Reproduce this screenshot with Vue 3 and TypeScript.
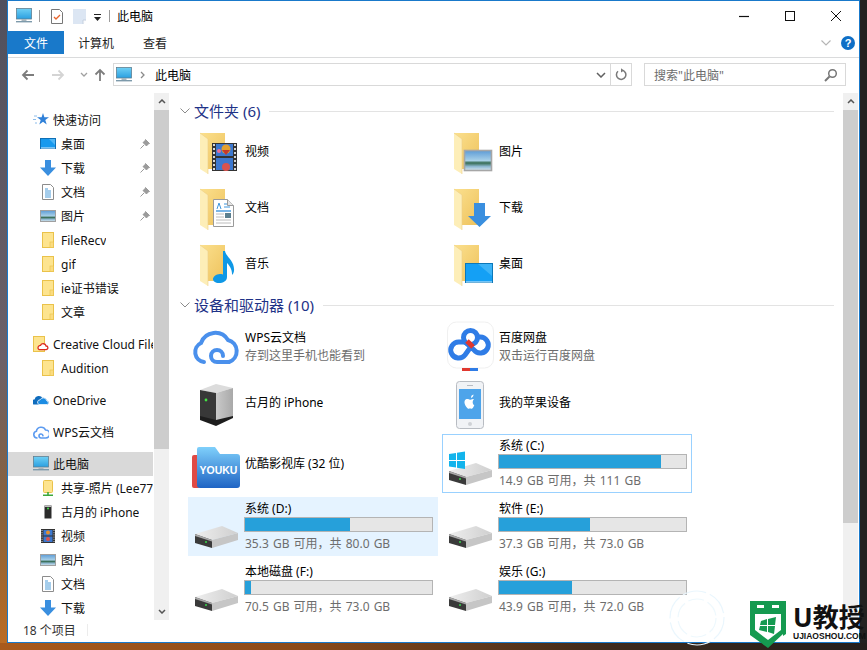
<script setup lang="ts">
interface NavRow {
  label: string
  icon: string
  child?: boolean
  pin?: boolean
  active?: boolean
  group?: boolean
}

interface Drive {
  title: string
  sub: string
  used: number
  win?: boolean
  state?: string
}

const navRows: NavRow[] = [
  { label: '快速访问', icon: 'n-star' },
  { label: '桌面', icon: 'n-desktop', child: true, pin: true },
  { label: '下载', icon: 'n-down', child: true, pin: true },
  { label: '文档', icon: 'n-doc', child: true, pin: true },
  { label: '图片', icon: 'n-pic', child: true, pin: true },
  { label: 'FileRecv', icon: 'n-folder', child: true },
  { label: 'gif', icon: 'n-folder', child: true },
  { label: 'ie证书错误', icon: 'n-folder', child: true },
  { label: '文章', icon: 'n-folder', child: true },
  { label: 'Creative Cloud Files', icon: 'n-cc', group: true },
  { label: 'Audition', icon: 'n-folder', child: true },
  { label: 'OneDrive', icon: 'n-onedrive', group: true },
  { label: 'WPS云文档', icon: 'n-wps', group: true },
  { label: '此电脑', icon: 'pc', group: true, active: true },
  { label: '共享-照片 (Lee77)', icon: 'n-share', child: true },
  { label: '古月的 iPhone', icon: 'n-tower', child: true },
  { label: '视频', icon: 'n-film', child: true },
  { label: '图片', icon: 'n-pic', child: true },
  { label: '文档', icon: 'n-doc', child: true },
  { label: '下载', icon: 'n-down', child: true }
]

const folders = [
  { label: '视频', overlay: 'ov-film' },
  { label: '图片', overlay: 'ov-pic' },
  { label: '文档', overlay: 'ov-doc' },
  { label: '下载', overlay: 'ov-down' },
  { label: '音乐', overlay: 'ov-music' },
  { label: '桌面', overlay: 'ov-desktop' }
]

const drivesTop = [
  { title: 'WPS云文档', sub: '存到这里手机也能看到', icon: 'd-wps' },
  { title: '百度网盘', sub: '双击运行百度网盘', icon: 'd-baidu' },
  { title: '古月的 iPhone', sub: '', icon: 'd-tower', lift: true },
  { title: '我的苹果设备', sub: '', icon: 'd-iphone', lift: true },
  { title: '优酷影视库 (32 位)', sub: '', icon: 'd-youku' }
]

const drives: Drive[] = [
  { title: '系统 (C:)', sub: '14.9 GB 可用，共 111 GB', used: 86.6, win: true, state: 'focused' },
  { title: '系统 (D:)', sub: '35.3 GB 可用，共 80.0 GB', used: 55.9, state: 'hovered' },
  { title: '软件 (E:)', sub: '37.3 GB 可用，共 73.0 GB', used: 48.9 },
  { title: '本地磁盘 (F:)', sub: '70.5 GB 可用，共 73.0 GB', used: 3.4 },
  { title: '娱乐 (G:)', sub: '43.9 GB 可用，共 72.0 GB', used: 39 }
]
</script>

<template>
  <div class="desk">
    <svg class="defs" width="0" height="0" aria-hidden="true">
      <defs>
        <linearGradient id="gFolder" x1="0" y1="0" x2="1" y2="1">
          <stop offset="0" stop-color="#fbe08e" />
          <stop offset="1" stop-color="#eec25c" />
        </linearGradient>
        <linearGradient id="gScreen" x1="0" y1="0" x2="0" y2="1">
          <stop offset="0" stop-color="#6fd0f5" />
          <stop offset="1" stop-color="#2a9fe0" />
        </linearGradient>
        <linearGradient id="gPhoto" x1="0" y1="0" x2="0" y2="1">
          <stop offset="0" stop-color="#5c9bd6" />
          <stop offset="0.5" stop-color="#a8d0e8" />
          <stop offset="0.62" stop-color="#356b52" />
          <stop offset="0.8" stop-color="#8db7d0" />
          <stop offset="1" stop-color="#dbe9f2" />
        </linearGradient>
        <linearGradient id="gDrive" x1="0" y1="0" x2="1" y2="0">
          <stop offset="0" stop-color="#eeeeee" />
          <stop offset="1" stop-color="#cfcfcf" />
        </linearGradient>
        <linearGradient id="gTower" x1="0" y1="0" x2="1" y2="0">
          <stop offset="0" stop-color="#c9c9c9" />
          <stop offset="1" stop-color="#a9a9a9" />
        </linearGradient>
        <linearGradient id="gYouku" x1="0" y1="0" x2="0" y2="1">
          <stop offset="0" stop-color="#7fd0fb" />
          <stop offset="1" stop-color="#1f64c4" />
        </linearGradient>

        <g id="pc">
          <rect x="0.5" y="0.5" width="15" height="10.5" fill="url(#gScreen)" stroke="#5f7f92" stroke-width="0.8" />
          <rect x="5.5" y="11" width="5" height="2" fill="#a9b6bd" />
          <rect x="0" y="13" width="16" height="1.4" fill="#7d9aab" />
        </g>
        <g id="n-star">
          <path d="M10 1l1.4 4.3H16l-3.7 2.8 1.4 4.4L10 9.8l-3.7 2.7 1.4-4.4L4 5.3h4.6z" fill="#2f80d8" />
          <path d="M4 4H1M3 7.5H0M4 11H2" stroke="#8cbcea" stroke-width="1" />
        </g>
        <g id="n-desktop">
          <rect x="0.5" y="2.5" width="15" height="10" fill="#1799ee" stroke="#0f6fb5" />
          <path d="M9 3h6v6z" fill="#4fb6f6" />
          <rect x="1" y="11.5" width="14" height="1" fill="#d5ecfb" />
        </g>
        <g id="n-down">
          <path d="M5 0h6v7.5h5L8 16 0 7.5h5z" fill="#3a8fdf" />
        </g>
        <g id="n-doc">
          <path d="M2.5 0.5h8l3 3v12h-11z" fill="#fff" stroke="#8c8c8c" />
          <path d="M5 5h3M5 7h6M5 9h6M5 11h6M5 13h6" stroke="#4a9bd8" stroke-width="1" />
        </g>
        <g id="n-pic">
          <rect x="0.5" y="2.5" width="15" height="11" fill="url(#gPhoto)" stroke="#a0a0a0" />
        </g>
        <g id="n-folder">
          <rect x="2.5" y="0.5" width="11" height="15" fill="#fde48f" stroke="#eac24a" />
          <rect x="10" y="10" width="3.5" height="5.5" fill="#fbdc7f" stroke="#eac24a" stroke-width="0.6" />
        </g>
        <g id="n-cc">
          <rect x="0.5" y="0.5" width="11" height="15" fill="#fde48f" stroke="#eac24a" />
          <path d="M5 12a2.5 2.5 0 0 1 2.5-2.6 3 3 0 0 1 5.6.6 1.8 1.8 0 0 1 0 3.6H7a1.8 1.8 0 0 1-2-1.6z" fill="#fff" stroke="#dc2b1f" stroke-width="1.3" />
        </g>
        <g id="n-onedrive">
          <path d="M1 12.5a2.5 2.5 0 0 1 .5-5A4.5 4.5 0 0 1 9.6 6a3.4 3.4 0 0 1 4.4 2.4 2.2 2.2 0 0 1 .5 4.1z" fill="#0f6cbd" />
          <path d="M6 12.5a2.4 2.4 0 0 1 1-4.6 3.6 3.6 0 0 1 6.8 1 2 2 0 0 1 .6 3.6z" fill="#1b8ce3" stroke="#fff" stroke-width="0.8" />
        </g>
        <g id="n-wps">
          <path d="M4 14a3.4 3.4 0 0 1-.6-6.7A4.8 4.8 0 0 1 12.5 6a3.9 3.9 0 0 1 .3 8H8a2 2 0 1 1 2-2.2" fill="none" stroke="#5c9bf0" stroke-width="1.6" stroke-linecap="round" />
        </g>
        <g id="n-share">
          <rect x="3.5" y="0.5" width="9" height="12" rx="1" fill="#fde48f" stroke="#eac24a" />
          <path d="M8 12v3M3 15.2h10" stroke="#3ca83c" stroke-width="1.6" />
        </g>
        <g id="n-tower">
          <path d="M4.5 1.5h7v13h-7z" fill="#2c2c2c" />
          <path d="M4.5 1.5h7v1.5h-7z" fill="#bfbfbf" />
          <circle cx="8" cy="4.5" r="1" fill="#46e04a" />
        </g>
        <g id="n-film">
          <rect x="1" y="1" width="14" height="14" fill="#333" />
          <rect x="3.5" y="2" width="9" height="5.5" fill="#3d78cf" />
          <rect x="3.5" y="8.5" width="9" height="5.5" fill="#3d78cf" />
          <circle cx="8" cy="4.5" r="2" fill="#e38f2e" />
          <circle cx="8" cy="11" r="2" fill="#d9534f" />
          <path d="M2 2v12M14 2v12" stroke="#ddd" stroke-dasharray="1 1.2" />
        </g>

        <g id="folder">
          <path d="M8 6h25v36H8z" fill="url(#gFolder)" />
          <path d="M8 6l8 6v35l-8-5z" fill="#fdeeb8" />
          <path d="M8 6l8 6v35" fill="none" stroke="#eccf86" stroke-width="0.6" />
        </g>
        <g id="ov-film">
          <rect x="20" y="16" width="25" height="28" fill="#333" />
          <rect x="24" y="17" width="17" height="12" fill="#3d78cf" />
          <rect x="24" y="31" width="17" height="12" fill="#3d78cf" />
          <circle cx="34" cy="22" r="4.5" fill="#e3a02e" />
          <path d="M30 23l4 5 4-5z" fill="#c5392f" />
          <circle cx="34" cy="40" r="4" fill="#d9534f" />
          <circle cx="27" cy="24" r="2" fill="#e86f9a" />
          <path d="M22 17v26M43 17v26" stroke="#d8d8d8" stroke-width="2" stroke-dasharray="2 2" />
        </g>
        <g id="ov-doc">
          <path d="M21.5 16.5h14l6 6v21h-20z" fill="#fff" stroke="#9a9a9a" />
          <path d="M35.5 16.5v6h6" fill="#e5e5e5" stroke="#9a9a9a" />
          <path d="M25 26l2-6 2 6M32 21h3M32 24h6" fill="none" stroke="#3f96dc" stroke-width="1" />
          <path d="M24 28h15" stroke="#3f96dc" stroke-width="1.4" />
          <path d="M24 31h8M24 34h8M24 37h15M24 40h15" stroke="#bcbcbc" />
          <rect x="33" y="30" width="6" height="5" fill="#5b7f8f" />
        </g>
        <g id="ov-pic">
          <rect x="18.5" y="23.5" width="27" height="20" fill="url(#gPhoto)" stroke="#a6a6a6" stroke-width="1.6" />
        </g>
        <g id="ov-down">
          <path d="M28 20h11v13h6L33.5 44 22 33h6z" fill="#3a8fdf" />
        </g>
        <g id="ov-music">
          <path d="M33 12c1 6 10 10 9 20-.3 2-1 3-2 4 .4-6-3-10-5-12v14c0 4-4 6-8 6s-6-2-6-4 3-5 7-5c2 0 3 .5 3 .5V12z" fill="#0f98e6" />
        </g>
        <g id="ov-desktop">
          <rect x="19.5" y="24.5" width="27" height="19" fill="#14a0f5" stroke="#0c78b9" />
          <path d="M32 25h14v12z" fill="#3cb4f8" />
          <rect x="20" y="42.5" width="26" height="1" fill="#d5ecfb" />
        </g>

        <g id="d-wps">
          <path d="M12 41a10 10 0 0 1-3-19A15 15 0 0 1 36 19a11.5 11.5 0 0 1 1 22H25a6 6 0 1 1 6-6" fill="none" stroke="#4a90ec" stroke-width="4" stroke-linecap="round" />
        </g>
        <g id="d-baidu">
          <rect x="1.5" y="1" width="46" height="46" rx="9" fill="#fff" stroke="#f0f0f0" />
          <path d="M24 27l-5 7a8 8 0 1 1-6-13h6l9 8a8 8 0 1 0 6-13h-3" fill="none" stroke="#2f7ce6" stroke-width="5" />
          <circle cx="24.500" cy="16.500" r="7" fill="none" stroke="#2f7ce6" stroke-width="5" />
          <path d="M21 20l6 6" stroke="#e0382f" stroke-width="5" />
          <rect x="16" y="47" width="8" height="3" fill="#e0382f" />
          <rect x="24" y="47" width="8" height="3" fill="#2f7ce6" />
        </g>
        <g id="d-tower">
          <path d="M24 13l17-5-17-4L8 10z" fill="#dcdcdc" />
          <path d="M24 13l17-5v29l-17 7z" fill="url(#gTower)" />
          <path d="M8 10l16 3v31L8 38z" fill="#383838" />
          <path d="M8 36l16 4 17-4v2l-17 8L8 40z" fill="#1d1d1d" />
          <circle cx="14" cy="20" r="1.400" fill="#43e343" />
        </g>
        <g id="d-iphone">
          <rect x="10.500" y="1.500" width="27" height="47" rx="3" fill="#f1f3f6" stroke="#b8bcc2" />
          <rect x="13" y="9" width="22" height="30" fill="#4ea4ea" />
          <path d="M28 19c-2-.5-3 .7-4 .7s-2-1.200-4-.5c-2 .8-2.500 5 1.500 9 1 1 1.800.3 2.500.3s1.500.7 2.500-.3c1-1 1.500-2.400 1.800-3-2-1-2.100-4.200-.3-6.200z" fill="#fff" />
          <path d="M25 18c0-2 1-3 2.500-3.400 0 2-1 3-2.500 3.400z" fill="#fff" />
          <circle cx="24" cy="44" r="2" fill="#cfd2d6" />
          <path d="M21 5.500h6" stroke="#b8bcc2" />
        </g>
        <g id="d-youku">
          <rect x="0" y="15" width="8" height="33" rx="2" fill="#e04a45" />
          <path d="M5 9q0-2 2-2h16l5 7h17q3 0 3 3v28q0 3-3 3H8q-3 0-3-3z" fill="url(#gYouku)" />
          <text x="26.500" y="34" text-anchor="middle" font-family="Liberation Sans, sans-serif" font-weight="700" font-size="10.500" fill="#fff">YOUKU</text>
        </g>
        <g id="d-drive">
          <path d="M3 31l27-8 16 7-26 7z" fill="url(#gDrive)" />
          <path d="M3 31l17 6v8L3 40z" fill="#3a3a3a" />
          <path d="M3 31l17 6v1.500L3 33z" fill="#a8a8a8" />
          <path d="M20 37l26-7v7l-26 8z" fill="#c6c6c6" />
          <circle cx="14" cy="39" r="1" fill="#36d84a" />
        </g>
        <g id="d-win">
          <path d="M3 14l7-1v7H3zM11 12.800l8-1.300V20h-8zM3 21h7v6.500l-7-1zM11 21h8v8l-8-1.300z" fill="#13b4ec" />
        </g>
      </defs>
    </svg>

    <div class="window">
      <header class="titlebar">
        <svg class="s16" viewBox="0 0 16 16"><use href="#pc" /></svg>
        <span class="qsep"></span>
        <svg class="qa-doc" viewBox="0 0 12 15">
          <path d="M.5.5h8l3 3v11H.500z" fill="#fff" stroke="#777" />
          <path d="M3 8l2 2 4-4" fill="none" stroke="#e8642c" stroke-width="1.300" />
        </svg>
        <svg class="qa-page" viewBox="0 0 13 15">
          <path d="M0 0h13v11l-3 4H0z" fill="#dce6f3" />
          <path d="M10 15v-4h3" fill="#fff" stroke="#c5d0de" />
        </svg>
        <svg class="qa-drop" viewBox="0 0 9 7">
          <path d="M1 .500h7" stroke="#222" />
          <path d="M1 3h7L4.500 7z" fill="#222" />
        </svg>
        <span class="qsep"></span>
        <span class="title">此电脑</span>
        <div class="winbtns">
          <svg viewBox="0 0 12 12" class="wbtn"><path d="M1 6.500h10" stroke="#111" stroke-width="1.200" /></svg>
          <svg viewBox="0 0 12 12" class="wbtn"><rect x="1.500" y="1.500" width="9" height="9" fill="none" stroke="#111" /></svg>
          <svg viewBox="0 0 12 12" class="wbtn"><path d="M1 1l10 10M11 1L1 11" stroke="#111" stroke-width="1" /></svg>
        </div>
      </header>

      <nav class="tabs">
        <span class="tab tab-file">文件</span>
        <span class="tab">计算机</span>
        <span class="tab">查看</span>
        <svg class="rib-chev" viewBox="0 0 10 6"><path d="M.500.500L5 5 9.500.500" fill="none" stroke="#b4b4b4" stroke-width="1.100" /></svg>
        <span class="help">?</span>
      </nav>

      <div class="addr-row">
        <svg class="nav-arrow" viewBox="0 0 14 12"><path d="M13 6H2M6.500 1.500L2 6l4.500 4.500" fill="none" stroke="#7d7d7d" stroke-width="1.800" /></svg>
        <svg class="nav-arrow" viewBox="0 0 14 12"><path d="M1 6h11M7.500 1.500L12 6l-4.500 4.500" fill="none" stroke="#d4d4d4" stroke-width="1.800" /></svg>
        <svg class="nav-chev" viewBox="0 0 8 5"><path d="M1 1l3 3 3-3" fill="none" stroke="#a0a0a0" stroke-width="1.300" /></svg>
        <svg class="nav-arrow up" viewBox="0 0 12 14"><path d="M6 13V2M1.500 6.500L6 2l4.500 4.500" fill="none" stroke="#7d7d7d" stroke-width="1.800" /></svg>
        <div class="addr">
          <svg class="s16" viewBox="0 0 16 16"><use href="#pc" /></svg>
          <svg class="crumb" viewBox="0 0 5 8"><path d="M1 1l3 3-3 3" fill="none" stroke="#8a8a8a" stroke-width="1.300" /></svg>
          <span class="addr-text">此电脑</span>
          <svg class="addr-chev" viewBox="0 0 10 6"><path d="M1 1l4 4 4-4" fill="none" stroke="#606060" stroke-width="1.500" /></svg>
          <span class="refresh">
            <svg viewBox="0 0 12 13" width="12" height="13"><path d="M7.500 2.200A4.700 4.700 0 1 1 3 3.200" fill="none" stroke="#7a7a7a" stroke-width="1.500" /><path d="M6 .200l3 2.200-3 2.200z" fill="#7a7a7a" /></svg>
          </span>
        </div>
        <div class="search">
          <span>搜索"此电脑"</span>
          <svg viewBox="0 0 14 14" width="14" height="14"><circle cx="8.500" cy="5.500" r="3.800" fill="none" stroke="#777" stroke-width="1.500" /><path d="M5.500 8.500L1 13" stroke="#777" stroke-width="2" /></svg>
        </div>
      </div>

      <div class="body">
        <aside class="sidebar">
          <div
            v-for="(row, i) in navRows"
            :key="i"
            class="nav-row"
            :class="{ child: row.child, active: row.active, group: row.group }"
          >
            <svg class="s16" viewBox="0 0 16 16"><use :href="'#' + row.icon" /></svg>
            <span class="nav-label">{{ row.label }}</span>
            <svg v-if="row.pin" class="pin" viewBox="0 0 10 10">
              <path d="M5.500.500l4 4-1.500.500L6.500 7 3 3.500 5 2zM4 6L.500 9.500" fill="#9b9b9b" stroke="#9b9b9b" />
            </svg>
          </div>
        </aside>

        <div class="scrollbar nav-scroll">
          <svg class="sb-arrow" viewBox="0 0 8 5"><path d="M1 4l3-3 3 3" fill="none" stroke="#555" stroke-width="1.500" /></svg>
          <div class="thumb"></div>
          <svg class="sb-arrow end" viewBox="0 0 8 5"><path d="M1 1l3 3 3-3" fill="none" stroke="#555" stroke-width="1.500" /></svg>
        </div>

        <main class="content">
          <div class="sec-head">
            <svg class="sec-chev" viewBox="0 0 10 6"><path d="M.500.500L5 5 9.500.500" fill="none" stroke="#8b8b8b" /></svg>
            <span class="sec-title">文件夹 (6)</span>
            <span class="sec-line"></span>
          </div>
          <div class="folders">
            <div v-for="f in folders" :key="f.label" class="tile">
              <svg class="s48" viewBox="0 0 48 48"><use href="#folder" /><use :href="'#' + f.overlay" /></svg>
              <span class="tile-title">{{ f.label }}</span>
            </div>
          </div>

          <div class="sec-head">
            <svg class="sec-chev" viewBox="0 0 10 6"><path d="M.500.500L5 5 9.500.500" fill="none" stroke="#8b8b8b" /></svg>
            <span class="sec-title">设备和驱动器 (10)</span>
            <span class="sec-line"></span>
          </div>
          <div class="devices">
            <div v-for="d in drivesTop" :key="d.title" class="tile">
              <svg class="s48" viewBox="0 0 48 48"><use :href="'#' + d.icon" /></svg>
              <div class="tile-text" :class="{ 'two-line': d.sub, lift: d.lift }">
                <div class="tile-title">{{ d.title }}</div>
                <div v-if="d.sub" class="tile-sub">{{ d.sub }}</div>
              </div>
            </div>
            <div v-for="d in drives" :key="d.title" class="tile drive" :class="d.state">
              <svg class="s48" viewBox="0 0 48 48">
                <use href="#d-drive" />
                <use v-if="d.win" href="#d-win" />
              </svg>
              <div class="tile-text">
                <div class="tile-title">{{ d.title }}</div>
                <div class="bar"><div class="bar-fill" :style="{ width: d.used + '%' }"></div></div>
                <div class="tile-sub">{{ d.sub }}</div>
              </div>
            </div>
          </div>
        </main>

        <div class="scrollbar main-scroll">
          <svg class="sb-arrow" viewBox="0 0 8 5"><path d="M1 4l3-3 3 3" fill="none" stroke="#555" stroke-width="1.500" /></svg>
          <div class="thumb"></div>
        </div>
      </div>

      <footer class="status">
        <span>18 个项目</span>
        <span class="status-sep"></span>
      </footer>
    </div>

    <div class="watermark">
      <svg class="wm-ring" viewBox="0 0 60 60">
        <circle cx="30" cy="30" r="27" fill="none" stroke="#eaf6fd" stroke-width="1.200" stroke-dasharray="24 4" />
        <circle cx="30" cy="30" r="19" fill="none" stroke="#eef8fd" stroke-width="1.200" stroke-dasharray="16 4" />
      </svg>
      <svg class="wm-shield" viewBox="0 0 37 47">
        <path d="M0 0h36v33l-3 2v-2L18 47 0 34z" fill="#159a50" />
        <path d="M5 13h26v16L18 39 5 29z" fill="#fff" />
        <rect x="7" y="4" width="7" height="3" fill="#fff" />
        <rect x="22" y="4" width="7" height="3" fill="#fff" />
        <path d="M11 20l6-2v6h-7zM18 18l8-2-1 8h-7zM10 25h7v6l-8-2zM18 25h7l-1 8-6-2z" fill="#159a50" />
      </svg>
      <div class="wm-text">
        <div class="wm-big">U教授</div>
        <div class="wm-small">UJIAOSHOU.COM</div>
      </div>
    </div>
  </div>
</template>

<style>
html,
body {
  margin: 0;
  overflow: hidden;
}
</style>

<style scoped>
.desk {
  position: relative;
  width: 867px;
  height: 650px;
  overflow: hidden;
  font-family: "Noto Sans", "Noto Sans CJK SC", sans-serif;
  font-size: 12px;
  color: #000;
  background:
    linear-gradient(90deg, #a85a1c 0, #8a4a1a 35%, #3e2a1c 70%, #241f1c 100%) 0 643px / 100% 7px no-repeat,
    linear-gradient(90deg, transparent 0, transparent 860px, #232120 860px) 0 0 / 100% 100% no-repeat,
    linear-gradient(180deg, #50505e 0, #6b6068 55%, #8c6238 80%, #bd6c22 100%);
}
.defs {
  position: absolute;
}
.window {
  display: flex;
  flex-direction: column;
  box-sizing: border-box;
  width: 853px;
  height: 643px;
  margin-left: 7px;
  background: #fff;
  border: 1px solid #1979ca;
}
.titlebar {
  display: flex;
  align-items: center;
  height: 30px;
  padding-left: 8px;
}
.s16 {
  width: 16px;
  height: 16px;
  flex: none;
}
.s48 {
  width: 48px;
  height: 48px;
  flex: none;
  overflow: visible;
}
.qsep {
  width: 1px;
  height: 12px;
  margin-left: 7px;
  background: #9c9c9c;
}
.qa-doc {
  width: 12px;
  height: 15px;
  margin-left: 11px;
}
.qa-page {
  width: 13px;
  height: 15px;
  margin-left: 10px;
}
.qa-drop {
  width: 9px;
  height: 7px;
  margin-left: 7px;
  margin-top: 2px;
}
.title {
  margin-left: 7px;
}
.winbtns {
  display: flex;
  gap: 34px;
  margin-left: auto;
  margin-right: 17px;
}
.wbtn {
  width: 12px;
  height: 12px;
}
.tabs {
  display: flex;
  align-items: center;
  height: 23px;
  padding-bottom: 3px;
  border-bottom: 1px solid #dadbdc;
}
.tab {
  display: flex;
  align-items: center;
  justify-content: center;
  height: 23px;
  padding: 0 14px;
  margin-right: 1px;
  color: #222;
}
.tab-file {
  box-sizing: border-box;
  width: 56px;
  padding: 0;
  margin-right: 0;
  background: #1979ca;
  color: #fff;
}
.rib-chev {
  width: 10px;
  height: 6px;
  margin-left: auto;
}
.help {
  display: flex;
  align-items: center;
  justify-content: center;
  width: 14px;
  height: 14px;
  margin: 0 4px 0 10px;
  border-radius: 50%;
  background: #0f6fc6;
  color: #fff;
  font: 700 11px "Liberation Sans", sans-serif;
}
.addr-row {
  display: flex;
  align-items: center;
  box-sizing: border-box;
  height: 35px;
  padding: 0 0 2px 13px;
}
.nav-arrow {
  width: 14px;
  height: 12px;
  margin-right: 16px;
}
.nav-arrow + .nav-chev {
  margin-left: -1px;
}
.nav-chev {
  width: 8px;
  height: 5px;
  margin-right: 6px;
}
.nav-arrow.up {
  width: 12px;
  height: 14px;
  margin-right: 7px;
}
.addr {
  display: flex;
  align-items: center;
  box-sizing: border-box;
  width: 519px;
  height: 23px;
  padding-left: 2px;
  border: 1px solid #d9d9d9;
}
.crumb {
  width: 5px;
  height: 8px;
  margin-left: 8px;
}
.addr-text {
  margin-left: 10px;
}
.addr-chev {
  width: 10px;
  height: 6px;
  margin-left: auto;
  margin-right: 4px;
}
.refresh {
  display: flex;
  align-items: center;
  justify-content: center;
  width: 20px;
  height: 21px;
  border-left: 1px solid #d9d9d9;
}
.search {
  display: flex;
  align-items: center;
  justify-content: space-between;
  box-sizing: border-box;
  width: 202px;
  height: 23px;
  margin-left: 12px;
  padding: 0 7px 0 9px;
  border: 1px solid #d9d9d9;
  color: #6d6d6d;
}
.body {
  display: flex;
  flex: 1;
  min-height: 0;
}
.sidebar {
  box-sizing: border-box;
  width: 145px;
  padding-top: 15px;
  overflow: hidden;
}
.nav-row {
  position: relative;
  display: flex;
  align-items: center;
  gap: 4px;
  height: 24px;
  padding-left: 25px;
  white-space: nowrap;
  color: #111;
}
.nav-row.child {
  padding-left: 32px;
  gap: 5px;
}
.nav-row.group {
  margin-top: 8px;
}
.nav-row.active {
  background: #d9d9d9;
}
.nav-label {
  overflow: hidden;
}
.pin {
  position: absolute;
  right: 3px;
  width: 10px;
  height: 10px;
}
.scrollbar {
  display: flex;
  flex-direction: column;
  align-items: center;
  flex: none;
  background: #f0f0f0;
}
.nav-scroll {
  width: 15px;
  margin-left: 1px;
  margin-right: 1px;
}
.main-scroll {
  width: 15px;
  margin-right: 1px;
}
.sb-arrow {
  width: 8px;
  height: 5px;
  margin: 6px 0;
}
.sb-arrow.end {
  margin-top: auto;
}
.thumb {
  width: 100%;
  background: #cdcdcd;
}
.nav-scroll .thumb {
  height: 339px;
}
.main-scroll .thumb {
  height: 413px;
}
.content {
  flex: 1;
  min-width: 0;
  box-sizing: border-box;
  padding: 9px 9px 0 18px;
  overflow: hidden;
}
.sec-head {
  display: flex;
  align-items: center;
  height: 18px;
  margin-left: -8px;
}
.sec-chev {
  width: 10px;
  height: 6px;
  margin-left: 0;
}
.sec-title {
  margin-left: 4px;
  font-size: 15px;
  line-height: 18px;
  color: #1e3287;
  white-space: nowrap;
}
.sec-line {
  flex: 1;
  height: 1px;
  margin-left: 9px;
  background: #e3e3e3;
}
.folders {
  display: grid;
  grid-template-columns: 250px 250px;
  grid-auto-rows: 56px;
  column-gap: 4px;
  margin: 3px 0 5px;
}
.devices {
  display: grid;
  grid-template-columns: 250px 250px;
  grid-template-rows: 58px 52px 59px 59px 59px;
  gap: 4px;
  margin-top: 2px;
}
.tile {
  display: flex;
  align-items: center;
  gap: 5px;
  box-sizing: border-box;
  padding-left: 4px;
  border: 1px solid transparent;
  border-left-width: 0;
}
.tile-text {
  flex: 1;
  min-width: 0;
  padding-right: 4px;
}
.tile-text.two-line {
  margin-top: 3px;
}
.tile-text.two-line .tile-sub {
  margin-top: 1px;
}
.tile-text.lift {
  margin-bottom: 3px;
}
.tile-title,
.tile-sub {
  line-height: 17px;
  white-space: nowrap;
}
.tile-sub {
  color: #6d6d6d;
}
.drive .tile-text {
  margin-top: -1px;
}
.drive .tile-sub {
  word-spacing: 1px;
}
.bar {
  box-sizing: border-box;
  height: 15px;
  margin: 0 0 3px -1px;
  background: #e6e6e6;
  border: 1px solid #b4b4b4;
}
.bar-fill {
  height: 100%;
  background: #26a0da;
}
.tile.focused {
  border: 1px solid #99d1ff;
  padding-left: 3px;
}
.tile.hovered {
  background: #e5f3ff;
}
.watermark {
  position: absolute;
  left: 670px;
  bottom: 0;
  width: 197px;
  height: 62px;
}
.wm-ring {
  position: absolute;
  left: -3px;
  top: 0;
  width: 60px;
  height: 60px;
}
.wm-shield {
  position: absolute;
  left: 80px;
  top: 13px;
  width: 37px;
  height: 47px;
}
.wm-text {
  position: absolute;
  left: 123px;
  top: 15px;
  width: 74px;
  line-height: 1;
}
.wm-big {
  font-size: 26px;
  font-weight: 700;
  line-height: 28px;
  color: #111;
  white-space: nowrap;
}
.wm-small {
  font: 700 8.5px "Liberation Sans", sans-serif;
  color: #111;
  white-space: nowrap;
}
.status {
  display: flex;
  align-items: center;
  box-sizing: border-box;
  height: 22px;
  padding: 0 0 2px 15px;
  color: #333;
}
.status-sep {
  width: 1px;
  height: 12px;
  margin-left: 11px;
  background: #ececec;
}
</style>
